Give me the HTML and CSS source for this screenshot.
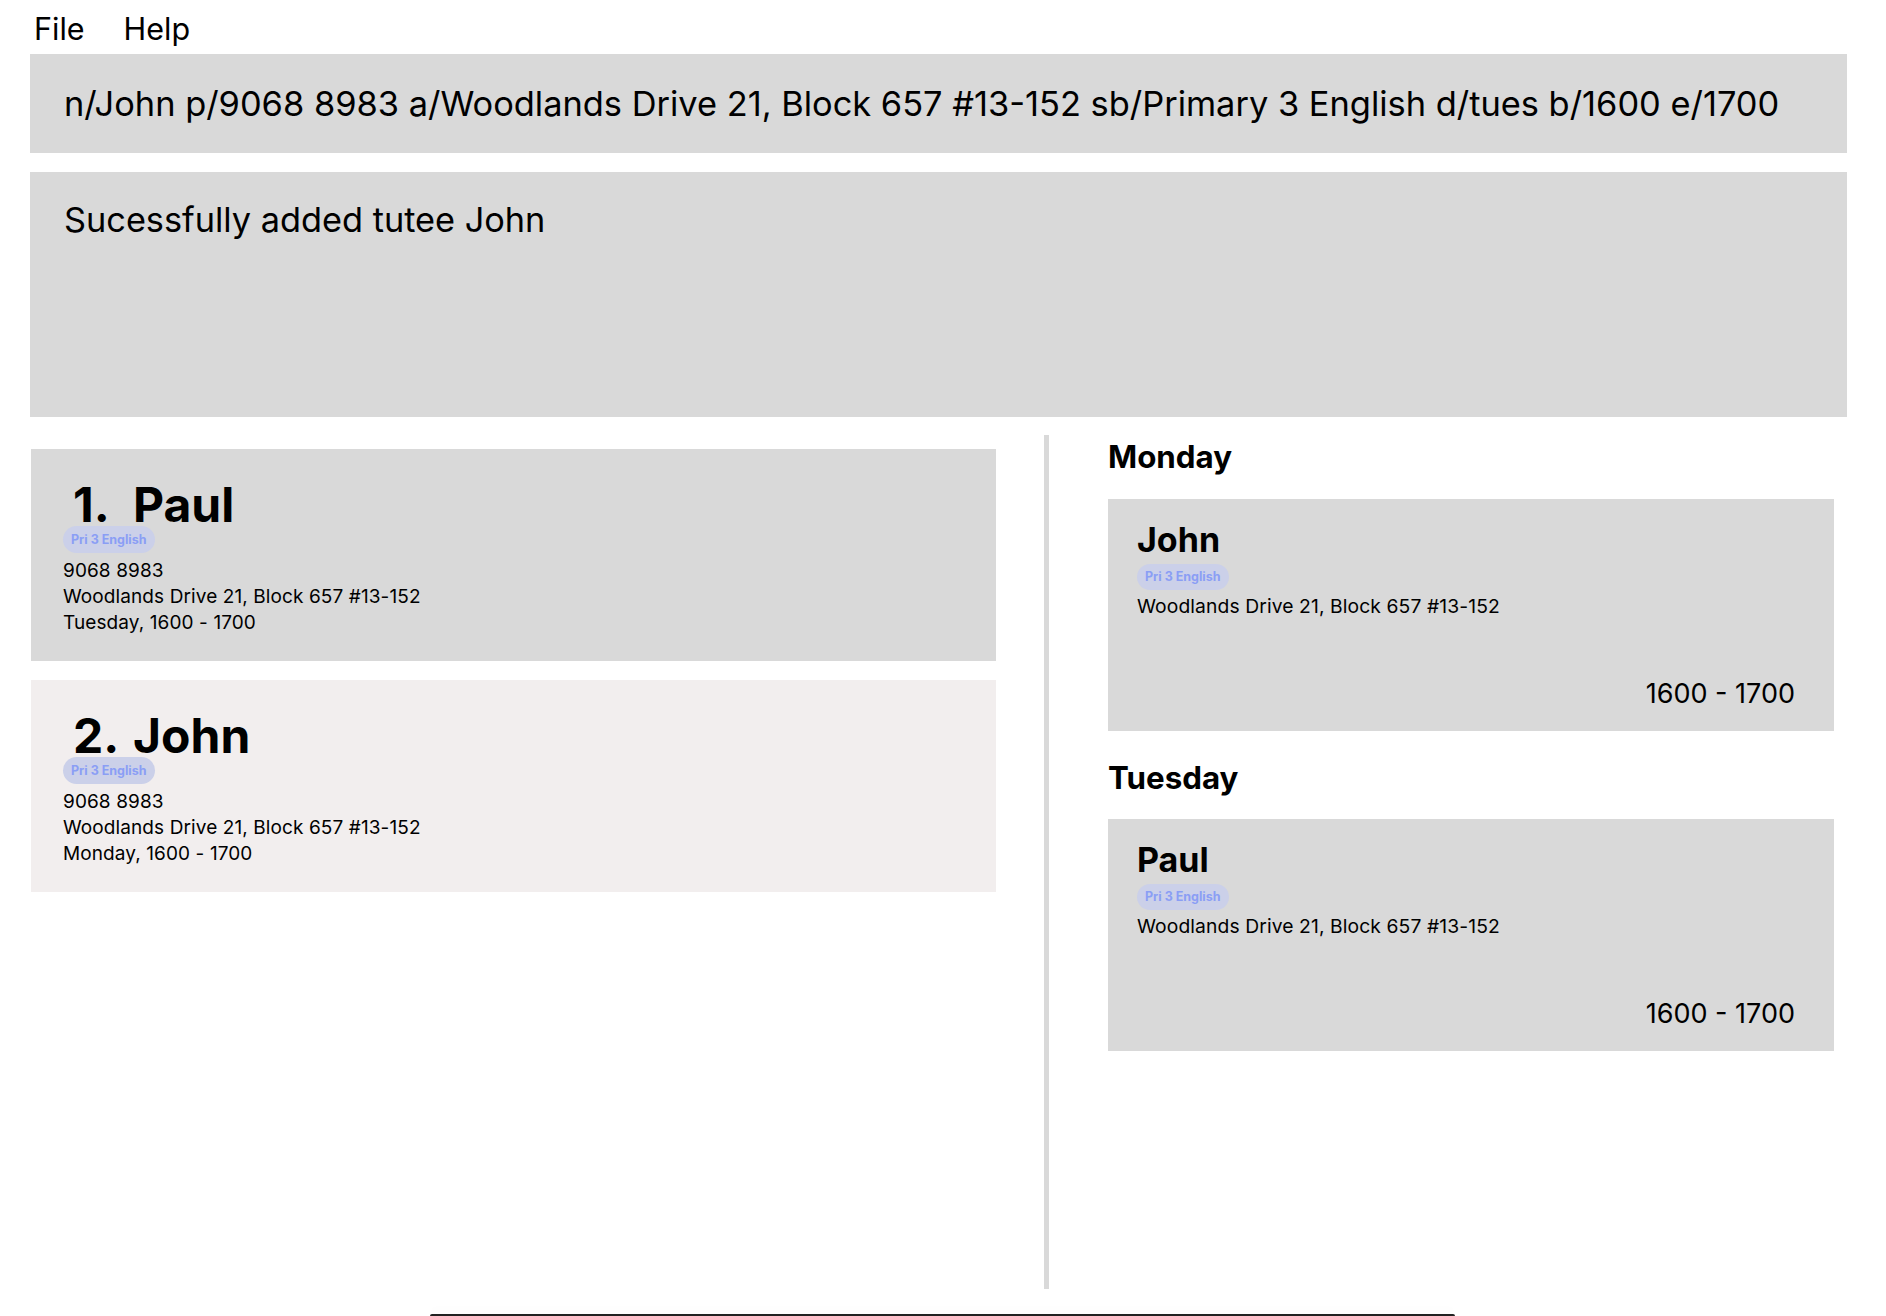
FILE: index.html
```html
<!DOCTYPE html>
<html lang="en">
<head>
<meta charset="utf-8">
<title>Tutee Manager</title>
<link rel="stylesheet" href="styles.css">
</head>
<body>
<div class="app">
  <nav class="menu">
    <span class="menu-item">File</span>
    <span class="menu-item">Help</span>
  </nav>
  <div class="command-box">n/John p/9068 8983 a/Woodlands Drive 21, Block 657 #13-152 sb/Primary 3 English d/tues b/1600 e/1700</div>
  <div class="result-box">Sucessfully added tutee John</div>
  <div class="main">
    <section class="list">
      <article class="card">
        <h2 class="card-title"><span class="card-index">1.</span><span class="card-name">Paul</span></h2>
        <span class="tag">Pri 3 English</span>
        <div class="card-lines">
          <div>9068 8983</div>
          <div>Woodlands Drive 21, Block 657 #13-152</div>
          <div>Tuesday, 1600 - 1700</div>
        </div>
      </article>
      <article class="card card-selected">
        <h2 class="card-title"><span class="card-index">2.</span><span class="card-name">John</span></h2>
        <span class="tag">Pri 3 English</span>
        <div class="card-lines">
          <div>9068 8983</div>
          <div>Woodlands Drive 21, Block 657 #13-152</div>
          <div>Monday, 1600 - 1700</div>
        </div>
      </article>
    </section>
    <div class="divider"></div>
    <section class="schedule">
      <h3 class="day">Monday</h3>
      <article class="slot">
        <h4 class="slot-name">John</h4>
        <span class="tag tag-sm">Pri 3 English</span>
        <div class="slot-address">Woodlands Drive 21, Block 657 #13-152</div>
        <div class="slot-time">1600 - 1700</div>
      </article>
      <h3 class="day day-next">Tuesday</h3>
      <article class="slot">
        <h4 class="slot-name">Paul</h4>
        <span class="tag tag-sm">Pri 3 English</span>
        <div class="slot-address">Woodlands Drive 21, Block 657 #13-152</div>
        <div class="slot-time">1600 - 1700</div>
      </article>
    </section>
  </div>
  <div class="dock-edge"></div>
</div>
</body>
</html>
```

FILE: styles.css
```css
* { box-sizing: border-box; }
html, body { margin: 0; padding: 0; background: #ffffff; }
body {
  font-family: Inter, "Noto Sans", "Liberation Sans", sans-serif;
  color: #000;
  width: 1886px;
  height: 1316px;
  overflow: hidden;
}
.app { display: flex; flex-direction: column; }

.menu {
  display: flex;
  height: 54px;
  padding: 11px 0 0 34px;
  gap: 39px;
  font-size: 30.5px;
  line-height: 36px;
}

.command-box {
  margin: 0 39px 0 30px;
  height: 99px;
  background: #d9d9d9;
  display: flex;
  align-items: center;
  padding-left: 34px;
  font-size: 34.4px;
  white-space: nowrap;
}

.result-box {
  margin: 19px 39px 0 30px;
  height: 245px;
  background: #d9d9d9;
  padding: 27px 0 0 34px;
  font-size: 34.3px;
  line-height: 41px;
}

.main {
  display: flex;
  margin-top: 18px;
  height: 854px;
  padding-left: 31px;
}

.list {
  width: 965px;
  padding-top: 14px;
  display: flex;
  flex-direction: column;
  gap: 19px;
}

.card {
  height: 212px;
  background: #d9d9d9;
  padding: 34px 0 0 32px;
  display: flex;
  flex-direction: column;
  align-items: flex-start;
}
.card-selected { background: #f2eeee; }

.card-title {
  margin: 0;
  padding-left: 10px;
  font-size: 48px;
  font-weight: 700;
  line-height: 43px;
  display: flex;
}
.card-index { width: 60px; flex: none; }

.tag {
  display: inline-block;
  height: 27px;
  line-height: 27px;
  padding: 0 8px;
  border-radius: 14px;
  background: #cbd0e9;
  color: #8a9ef5;
  font-size: 12.5px;
  font-weight: 700;
}
.tag-sm { height: 26px; line-height: 26px; margin-top: 4px; }

.card-lines {
  margin-top: 5px;
  font-size: 19px;
  letter-spacing: 0.1px;
  line-height: 26px;
}

.divider {
  width: 5px;
  margin-left: 48px;
  background: #d9d9d9;
}

.schedule {
  width: 726px;
  margin-left: 59px;
  padding-top: 3px;
  display: flex;
  flex-direction: column;
}

.day {
  margin: 0 0 23px 0;
  font-size: 31.3px;
  font-weight: 700;
  line-height: 38px;
}
.day-next { margin-top: 28px; margin-bottom: 22px; }

.slot {
  height: 232px;
  background: #d9d9d9;
  padding: 21px 39px 22px 29px;
  display: flex;
  flex-direction: column;
  align-items: flex-start;
}
.slot-name {
  margin: 0;
  font-size: 34px;
  font-weight: 700;
  line-height: 40px;
}
.slot-address {
  margin-top: 3px;
  font-size: 19.3px;
  letter-spacing: 0.1px;
  line-height: 26px;
}
.slot-time {
  margin-top: auto;
  align-self: flex-end;
  font-size: 27px;
  line-height: 30px;
}

.dock-edge {
  margin: 25px 0 0 430px;
  width: 1025px;
  height: 2px;
  background: #222;
  border-radius: 3px 3px 0 0;
  box-shadow: 0 -4px 10px rgba(0,0,0,0.04);
}
```
